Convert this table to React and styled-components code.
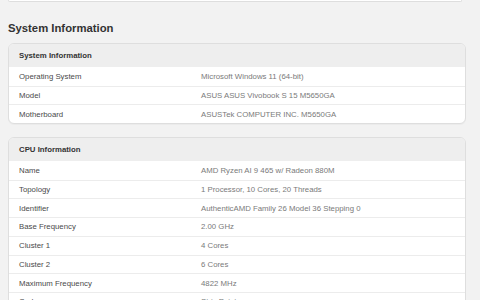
import styled, { createGlobalStyle } from 'styled-components'

const GlobalStyle = createGlobalStyle`
    html, body {
        margin: 0;
        padding: 0;
        background: #f2f2f2;
    }
    body {
        font-family: 'Liberation Sans', Arial, sans-serif;
    }
`

const Page = styled.div`
    padding: 0 14px 20px 8px;
`

const PrevCardTail = styled.div`
    height: 1px;
    margin-right: 4px;
    background: #fff;
    border: 1px solid #dedede;
    border-top: none;
    border-radius: 0 0 5px 5px;
`

const Heading = styled.h2`
    margin: 19px 0 7px;
    font-size: 11.3px;
    line-height: 15px;
    font-weight: bold;
    color: #333;
`

const Card = styled.section`
    background: #fff;
    border: 1px solid #dedede;
    border-radius: 6px;
    overflow: hidden;
    margin-bottom: 13px;
    box-shadow: 0 1px 1px rgba(0, 0, 0, 0.03);
`

const CardHeader = styled.div`
    height: 23px;
    display: flex;
    align-items: center;
    padding: 0 10px;
    background: #eeeeee;
    font-size: 7.8px;
    font-weight: bold;
    color: #333;
`

const Row = styled.div`
    display: grid;
    grid-template-columns: 182px 1fr;
    align-items: center;
    height: 18.7px;
    box-sizing: border-box;
    padding: 0 10px;
    border-top: 1px solid #ececec;
    font-size: 7.8px;
    &:first-of-type {
        border-top: none;
    }
`

const Label = styled.span`
    color: #4a4a4a;
`

const Value = styled.span`
    color: #7a7a7a;
`

const sections = [
    {
        title: 'System Information',
        rows: [
            ['Operating System', 'Microsoft Windows 11 (64-bit)'],
            ['Model', 'ASUS ASUS Vivobook S 15 M5650GA'],
            ['Motherboard', 'ASUSTek COMPUTER INC. M5650GA'],
        ],
    },
    {
        title: 'CPU Information',
        rows: [
            ['Name', 'AMD Ryzen AI 9 465 w/ Radeon 880M'],
            ['Topology', '1 Processor, 10 Cores, 20 Threads'],
            ['Identifier', 'AuthenticAMD Family 26 Model 36 Stepping 0'],
            ['Base Frequency', '2.00 GHz'],
            ['Cluster 1', '4 Cores'],
            ['Cluster 2', '6 Cores'],
            ['Maximum Frequency', '4822 MHz'],
            ['Codename', 'Strix Point'],
        ],
    },
]

const InfoCard = ({ title, rows }) => (
    <Card>
        <CardHeader>{title}</CardHeader>
        <div>
            {rows.map(([label, value]) => (
                <Row key={label}>
                    <Label>{label}</Label>
                    <Value>{value}</Value>
                </Row>
            ))}
        </div>
    </Card>
)

const App = () => {
    return (
        <Page>
            <GlobalStyle />
            <PrevCardTail />
            <Heading>System Information</Heading>
            {sections.map(s => (
                <InfoCard key={s.title} title={s.title} rows={s.rows} />
            ))}
        </Page>
    )
}

export default App
